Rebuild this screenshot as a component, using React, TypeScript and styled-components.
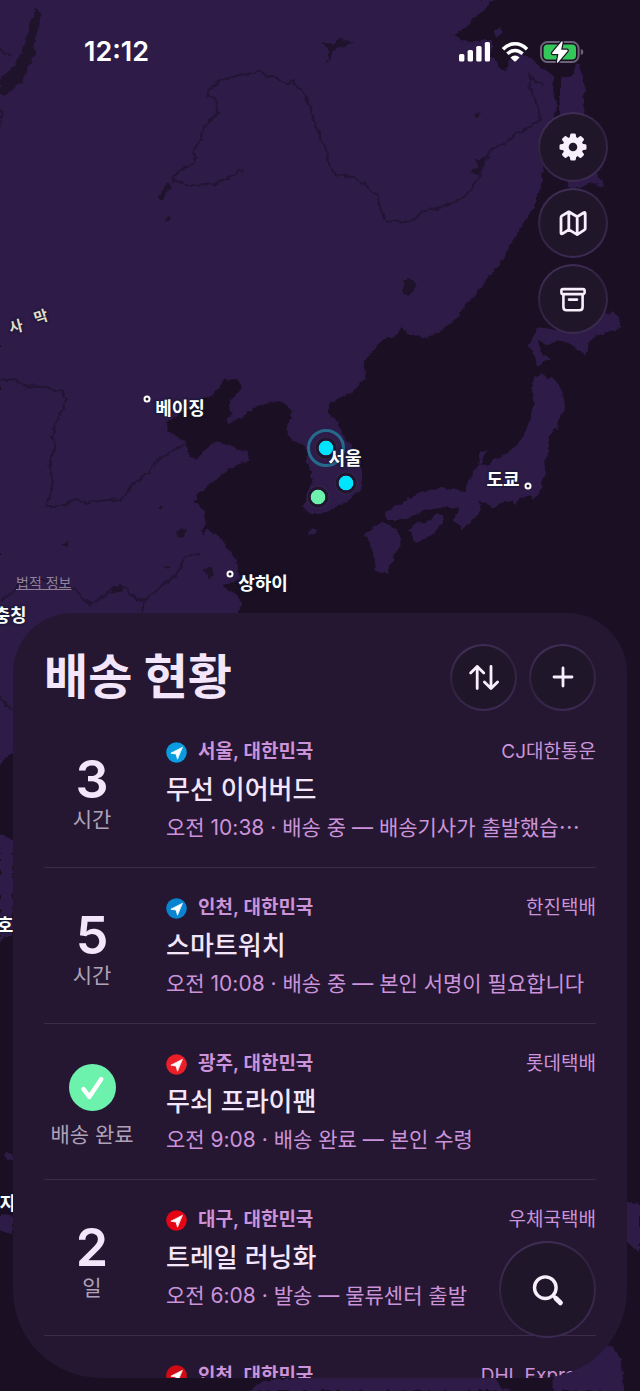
import type { ReactNode } from "react"
import styled, { createGlobalStyle } from "styled-components"

const GlobalStyle=createGlobalStyle`
*{
    box-sizing:border-box;
}
body{
    margin:0;
    background:#1b0f24;
    font-family:Inter,"Noto Sans CJK KR",sans-serif;
    color:#f3e6fa;
}
`
const Screen=styled.main`
    position:relative;
    display:flex;
    flex-direction:column;
    height:100vh;
    overflow:hidden;
`

/* map */

const MapLayer=styled.div`
    position:absolute;
    top:0;
    left:0;
    width:100%;
    aspect-ratio:640 / 1391;
`
const MapSvg=styled.svg`
    display:block;
    width:100%;
    height:100%;
`
const Place=styled.span<{$x:number,$y:number,$turn?:number,$muted?:boolean}>`
    position:absolute;
    left:${p=>p.$x/6.4}%;
    top:${p=>p.$y/13.91}%;
    transform:translate(-50%,-50%) rotate(${p=>p.$turn||0}deg);
    font-size:${p=>p.$muted?15:18}px;
    line-height:24px;
    font-weight:${p=>p.$muted?600:700};
    color:${p=>p.$muted?"#e6dcc8":"#ffffff"};
    white-space:nowrap;
    text-shadow:0 0 3px #0d1a2c,0 0 2px #0d1a2c;
`
const Town=styled.i<{$x:number,$y:number}>`
    position:absolute;
    left:${p=>p.$x/6.4}%;
    top:${p=>p.$y/13.91}%;
    width:7px;
    height:7px;
    transform:translate(-50%,-50%);
    border:2px solid #ffffff;
    border-radius:50%;
    background:#1b0f24;
`
const Pin=styled.i<{$x:number,$y:number,$color:string}>`
    position:absolute;
    left:${p=>p.$x/6.4}%;
    top:${p=>p.$y/13.91}%;
    width:21px;
    height:21px;
    transform:translate(-50%,-50%);
    border:3px solid #21152f;
    border-radius:50%;
    background:${p=>p.$color};
    background-clip:padding-box;
    box-shadow:0 0 0 1px #34264a;
`
const Halo=styled.i<{$x:number,$y:number}>`
    position:absolute;
    left:${p=>p.$x/6.4}%;
    top:${p=>p.$y/13.91}%;
    width:38px;
    height:38px;
    transform:translate(-50%,-50%);
    border:3px solid #246b8e;
    border-radius:50%;
`

/* top part */

const Top=styled.div`
    position:relative;
    display:flex;
    flex-direction:column;
    flex:1;
    min-height:0;
`
const StatusBar=styled.header`
    display:flex;
    justify-content:space-between;
    align-items:center;
    height:104px;
    padding:0 56px 0 84px;
`
const Clock=styled.time`
    font-size:27px;
    line-height:32px;
    font-weight:600;
    color:#ffffff;
`
const StatusIcons=styled.div`
    display:flex;
    align-items:center;
    gap:11px;
`
const Actions=styled.nav`
    display:flex;
    flex-direction:column;
    align-items:flex-end;
    gap:6px;
    padding:8px 32px 0;
`
const RoundButton=styled.button<{$size:number}>`
    display:flex;
    align-items:center;
    justify-content:center;
    width:${p=>p.$size}px;
    height:${p=>p.$size}px;
    padding:0;
    border:2px solid transparent;
    border-radius:50%;
    background:
        linear-gradient(#201629,#201629) padding-box,
        linear-gradient(160deg,#45325f,#30213f 45%,#3f2c58) border-box;
    color:#f7effc;
    cursor:pointer;
`
const Legal=styled.a`
    align-self:flex-start;
    margin:auto 16px 20px;
    font-size:14px;
    line-height:20px;
    color:#8f8299;
`

/* sheet */

const Sheet=styled.section`
    position:relative;
    flex:0 0 55vh;
    margin:0 13px 13px;
    padding:31px 31px 0;
    border-radius:60px 60px 88px 88px;
    background:#251731;
    overflow:hidden;
`
const SheetHeader=styled.div`
    display:flex;
    align-items:center;
    gap:12px;
    margin-bottom:1px;
`
const Heading=styled.h1`
    flex:1;
    margin:0;
    font-size:48px;
    line-height:66px;
    font-weight:700;
`
const List=styled.ul`
    margin:0;
    padding:0;
    list-style:none;
`
const Row=styled.li`
    display:flex;
    align-items:center;
    gap:26px;
    height:156px;
    border-bottom:1px solid #3a2b46;
`
const Eta=styled.div`
    display:flex;
    flex-direction:column;
    align-items:center;
    flex:0 0 96px;
    padding-top:10px;
`
const Count=styled.strong`
    font-size:52px;
    line-height:52px;
    font-weight:600;
`
const Unit=styled.span<{$done?:boolean}>`
    margin-top:${p=>p.$done?10:0}px;
    font-size:21px;
    line-height:28px;
    color:#afa2b8;
`
const Info=styled.div`
    display:flex;
    flex-direction:column;
    gap:6px;
    flex:1;
    min-width:0;
    padding-top:2px;
`
const InfoTop=styled.div`
    display:flex;
    align-items:center;
    gap:11px;
    font-size:19px;
    line-height:28px;
    color:#cb93da;
`
const Location=styled.span`
    flex:1;
    font-weight:600;
    white-space:nowrap;
`
const Carrier=styled.span`
    white-space:nowrap;
`
const Name=styled.h2`
    margin:0;
    font-size:26px;
    line-height:36px;
    font-weight:500;
`
const Detail=styled.p`
    margin:0;
    font-size:21px;
    line-height:28px;
    color:#cb93da;
    white-space:nowrap;
    overflow:hidden;
`
const SearchSlot=styled.div`
    position:absolute;
    right:31px;
    bottom:40px;
`

type Parcel={
    count?:string
    unit:string
    place:string
    carrier:string
    name:string
    detail:string
    color:string
}

const parcels:Parcel[]=[
    {count:"3",unit:"시간",place:"서울, 대한민국",carrier:"CJ대한통운",name:"무선 이어버드",detail:"오전 10:38 · 배송 중 — 배송기사가 출발했습⋯",color:"#0a9ce0"},
    {count:"5",unit:"시간",place:"인천, 대한민국",carrier:"한진택배",name:"스마트워치",detail:"오전 10:08 · 배송 중 — 본인 서명이 필요합니다",color:"#0a84d0"},
    {unit:"배송 완료",place:"광주, 대한민국",carrier:"롯데택배",name:"무쇠 프라이팬",detail:"오전 9:08 · 배송 완료 — 본인 수령",color:"#ec1f29"},
    {count:"2",unit:"일",place:"대구, 대한민국",carrier:"우체국택배",name:"트레일 러닝화",detail:"오전 6:08 · 발송 — 물류센터 출발",color:"#e60514"},
]

function Icon({size,children}:{size:number,children:ReactNode}){
    return(
        <svg width={size} height={size} viewBox={`${-size/2} ${-size/2} ${size} ${size}`} fill="none" stroke="currentColor" strokeLinecap="round" strokeLinejoin="round" aria-hidden="true">
            {children}
        </svg>
    )
}

function GearIcon(){
    return(
        <Icon size={30}>
            <circle r="7.3" strokeWidth="6"/>
            {[0,45,90,135,180,225,270,315].map(a=>
                <path key={a} d="M-2 -9 L-1.5 -12.2 H1.5 L2 -9 Z" fill="currentColor" strokeWidth="2.6" transform={`rotate(${a})`}/>
            )}
        </Icon>
    )
}

function MapIcon(){
    return(
        <Icon size={30}>
            <path strokeWidth="2.8" d="M-12 -5.6 Q-12 -6.6 -11.2 -7.1 L-4.2 -11.2 L4.2 -6.2 L10.6 -10.3 Q12.2 -11 12.2 -9.4 V5.4 Q12.2 6.4 11.4 6.9 L4.2 11.6 L-4.2 6.6 L-10.4 10.6 Q-12 11.5 -12 9.8 Z M-4.2 -11 V6.6 M4.2 -6.2 V11.4"/>
        </Icon>
    )
}

function ArchiveIcon(){
    return(
        <Icon size={30}>
            <rect x="-11.6" y="-9.9" width="23.2" height="5" rx="1.6" strokeWidth="2.6"/>
            <path strokeWidth="2.6" d="M-9.6 -4.8 V8 Q-9.6 11.2 -6.4 11.2 H6.4 Q9.6 11.2 9.6 8 V-4.8 M-4 0.6 H4"/>
        </Icon>
    )
}

function SortIcon(){
    return(
        <Icon size={34}>
            <path strokeWidth="2.8" d="M-6.8 11.6 V-10.6 M-13.4 -4 L-6.8 -10.6 L-0.2 -4 M7 -10.6 V11.6 M0.4 5 L7 11.6 L13.6 5"/>
        </Icon>
    )
}

function PlusIcon(){
    return(
        <Icon size={26}>
            <path strokeWidth="2.8" d="M-9 0 H9 M0 -9 V9"/>
        </Icon>
    )
}

function SearchIcon(){
    return(
        <Icon size={36}>
            <circle cx="-2.7" cy="-2.3" r="10.8" strokeWidth="3.4"/>
            <path strokeWidth="3.4" d="M5.4 5.8 L8 8.4"/>
            <path strokeWidth="5" d="M8 8.4 L12.4 12.8"/>
        </Icon>
    )
}

function CheckIcon(){
    return(
        <Icon size={47}>
            <circle r="23.5" fill="#6cf2ad" stroke="none"/>
            <path stroke="#ffffff" strokeWidth="4.4" d="M-9 1.6 L-3.2 9.4 L8.8 -8.4"/>
        </Icon>
    )
}

function PlaceIcon({color}:{color:string}){
    return(
        <Icon size={21}>
            <circle r="10.3" fill={color} stroke="none"/>
            <path fill="#ffffff" stroke="#ffffff" strokeWidth="0.8" d="M5.6 -5 L-5.6 0.7 L-0.4 1.5 L0.9 6.3 Z"/>
        </Icon>
    )
}

function Phone(){
    return(
        <StatusIcons>
            <svg width="31" height="22" viewBox="0 0 31 22" fill="#ffffff" aria-hidden="true">
                <rect x="0" y="13" width="5.4" height="7.6" rx="1.6"/>
                <rect x="8.6" y="9" width="5.4" height="11.6" rx="1.6"/>
                <rect x="17.2" y="5" width="5.4" height="15.6" rx="1.6"/>
                <rect x="25.8" y="1" width="5.2" height="19.6" rx="1.6"/>
            </svg>
            <svg width="28" height="22" viewBox="0 0 28 22" fill="none" stroke="#ffffff" aria-hidden="true">
                <path strokeWidth="3.6" d="M2 8.2 Q7.4 2.8 14 2.8 T26 8.2"/>
                <path strokeWidth="3.4" d="M6.4 12.8 Q9.8 9.5 14 9.5 T21.6 12.8"/>
                <path fill="#ffffff" stroke="none" d="M9.4 16.4 Q14 12.6 18.6 16.4 L14.8 20.2 Q14 20.9 13.2 20.2 Z"/>
            </svg>
            <svg width="44" height="24" viewBox="0 0 44 24" fill="none" aria-hidden="true">
                <rect x="1" y="2" width="37.6" height="20" rx="6.4" stroke="#6c6277" strokeWidth="2"/>
                <rect x="3.6" y="4.6" width="32.4" height="14.8" rx="4" fill="#34c759"/>
                <path fill="#6c6277" d="M40.8 9 Q43.4 9.6 43.4 12 T40.8 15 Z"/>
                <path fill="#ffffff" stroke="#1b0f24" strokeWidth="2.4" strokeLinejoin="round" paintOrder="stroke" d="M21.6 1.4 Q22.8 1 22.6 2.4 L21.2 9.8 H27 Q28.2 10 27.4 11.2 L18 22.4 Q16.8 23.4 17 21.6 L18.4 14 H12.8 Q11.4 13.8 12.4 12.4 Z"/>
            </svg>
        </StatusIcons>
    )
}

const mainland="M0 0 H493 L482 10 L470 21 L462 29 L453 35 L460 42 L475 43 L486 40 L492 44 L490 56 L498 68 L506 72 L511 60 L520 53 L530 59 L540 67 L553 78 L552 92 L556 108 L552 122 L548 140 L543 160 L541 180 L535 203 L520 227 L507 250 L497 267 L477 290 L463 307 L453 321 L433 334 L423 337 L407 332 L402 325 L395 335 L382 340 L372 350 L363 362 L364 378 L350 392 L330 402 L327 413 L337 423 L343 437 L355 450 L360 463 L360 487 L352 497 L333 507 L320 513 L310 513 L303 505 L310 497 L313 480 L308 463 L307 446 L293 440 L287 430 L293 410 L287 403 L277 400 L257 405 L240 417 L227 422 L233 415 L230 403 L243 387 L240 380 L233 378 L223 380 L213 393 L193 403 L177 415 L166 422 L167 432 L185 442 L187 457 L197 460 L207 450 L217 442 L230 448 L248 452 L247 460 L230 467 L213 480 L197 493 L193 502 L203 510 L205 520 L200 530 L202 538 L207 530 L218 537 L230 553 L235 562 L238 577 L220 587 L233 593 L240 603 L238 613 L200 720 L14 750 L8 754 L0 764 Z"

const islands=[
    "M560 77 L570 76 L577 63 L582 70 L585 90 L583 115 L590 150 L598 176 L603 187 L592 183 L580 187 L567 187 L563 150 L560 110 Z",
    "M493 30 L500 27 L502 33 L496 38 Z",
    "M532 337 L538 327 L555 330 L600 317 L613 310 L617 316 L622 327 L607 333 L595 336 L590 342 L586 355 L577 350 L568 342 L560 340 L547 345 L538 340 L539 349 L545 355 L550 358 L537 366 L535 357 L530 347 Z",
    "M533 377 L532 387 L533 403 L530 423 L520 440 L507 453 L487 465 L481 466 L483 458 L487 451 L480 452 L478 466 L470 480 L465 492 L443 487 L420 492 L403 502 L385 513 L387 520 L403 520 L427 510 L447 507 L460 508 L453 520 L462 529 L473 520 L483 510 L479 500 L486 503 L492 508 L500 505 L513 500 L516 506 L520 498 L529 494 L533 500 L539 493 L543 483 L545 467 L548 453 L548 437 L557 428 L558 420 L565 407 L563 393 L555 380 L547 377 L542 373 Z",
    "M380 522 L390 526 L397 530 L402 540 L393 557 L388 574 L375 572 L373 553 L368 537 L363 535 L372 528 Z",
    "M408 532 L417 523 L430 520 L433 514 L443 515 L443 523 L435 533 L417 543 Z",
    "M307 533 Q312 527 318 530 Q314 537 307 533 Z",
    "M0 834 L13 840 L13 933 L0 941 Z",
    "M4 1154 Q8 1150 13 1154 L13 1160 L6 1161 Z",
    "M0 1213 L13 1216 L13 1235 L0 1229 Z",
    "M620 1199 L640 1205 L640 1253 L620 1236 Z",
    "M612 1346 L620 1358 L622 1374 L624 1391 H553 L552 1377 H495 L500 1386 L514 1391 H248 L262 1381 L340 1374 Z",
]

const lakes=[
    "M35 9 L41 12 L38 26 L35 37 L35 55 L28 68 L25 78 L15 88 L5 96 L0 93 L0 80 L17 63 L23 47 L30 27 Z",
    "M168 183 L173 188 L165 196 L161 201 L157 196 Z",
    "M168 216 L171 217 L169 222 L165 222 Z",
    "M403 279 L412 279 L416 285 L408 297 L403 290 Z",
    "M322 42 L334 44 L340 39 L346 42 L356 41 L342 47 L334 50 L326 64 L330 52 Z",
    "M474 113 L480 114 L476 118 Z",
    "M470 172 L477 166 L475 160 L491 157 L484 163 L480 176 Z",
    "M528 72 L532 76 L530 80 Z",
    "M205 570 L211 568 L214 574 L209 580 Z",
    "M176 534 L183 527 L187 533 L180 538 Z",
    "M163 565 L170 566 L166 569 Z",
    "M114 587 L122 583 L121 591 L110 594 Z",
    "M158 507 L162 507 L161 510 Z",
    "M62 545 L69 541 L68 547 Z",
]

const rivers=[
    "M172 183 L176 174 L186 166 L194 164 L196 159 L193 153 L199 141 L206 125 L217 113 L218 103 L214 97 L207 97 L209 91 L219 81 L240 75 L260 72 L275 78 L286 83 L293 82 L302 91 L309 103 L315 125 L320 135 L326 150 L330 168 L336 175 L349 176 L362 182 L377 195 L381 209 L387 221 L410 222 L420 213 L450 204 L466 195 L479 178 L485 158 L493 148 L506 143 L514 135 L531 126 L540 120 L537 103 L529 88 L531 78 L543 85",
    "M172 177 L177 182 L181 181 L188 186 L205 184 L214 185 L228 178 L243 170",
    "M0 381 L14 379 L25 386 L46 387 L63 392 L67 400 L61 411 L51 436 L56 446 L50 460 L53 487 L47 506 L62 506 L75 499 L88 503 L108 500 L120 501 L133 485 L150 471 L158 459 L172 452 L185 443",
    "M0 600 L10 594 L20 585 L40 580 L60 583 L76 590 L84 600 L92 604 L102 597 L116 586 L126 589 L138 601 L148 598 L160 587 L176 575 L185 557 L200 553",
    "M144 601 L142 612 M0 48 L5 52 L12 55 M0 108 Q5 116 0 126 M0 695 L8 708 L13 709",
]

function AsiaMap(){
    return(
        <MapLayer>
            <MapSvg viewBox="0 0 640 1391" role="img" aria-label="지도">
                <defs>
                    <filter id="coast" x="0" y="0" width="100%" height="100%" colorInterpolationFilters="sRGB">
                        <feTurbulence type="fractalNoise" baseFrequency="0.14" numOctaves="3" seed="4" result="noise"/>
                        <feDisplacementMap in="SourceGraphic" in2="noise" scale="6" xChannelSelector="R" yChannelSelector="G"/>
                    </filter>
                </defs>
                <rect width="640" height="1391" fill="#1b0f24"/>
                <g filter="url(#coast)">
                    <path d={mainland} fill="#2e1b47" stroke="#2e1b47" strokeWidth="2"/>
                    {islands.map(d=><path key={d} d={d} fill="#2e1b47"/>)}
                    {lakes.map(d=><path key={d} d={d} fill="#1f122b"/>)}
                    {rivers.map(d=><path key={d} d={d} fill="none" stroke="#221433" strokeWidth="2"/>)}
                </g>
            </MapSvg>
            <Place $x={16} $y={327} $turn={-14} $muted>사</Place>
            <Place $x={41} $y={317} $turn={-18} $muted>막</Place>
            <Town $x={147} $y={399}/>
            <Place $x={180} $y={409}>베이징</Place>
            <Town $x={230} $y={574}/>
            <Place $x={263} $y={584}>상하이</Place>
            <Place $x={503} $y={480}>도쿄</Place>
            <Town $x={528} $y={486}/>
            <Place $x={10} $y={616}>충칭</Place>
            <Place $x={5} $y={926}>호</Place>
            <Place $x={8} $y={1204}>자</Place>
            <Halo $x={326} $y={448}/>
            <Pin $x={326} $y={448} $color="#00e5ff"/>
            <Place $x={345} $y={459}>서울</Place>
            <Pin $x={346} $y={483} $color="#00e5ff"/>
            <Pin $x={318} $y={497} $color="#6cf2ad"/>
        </MapLayer>
    )
}

function PlaceLine({color,place,carrier}:{color:string,place:string,carrier:string}){
    return(
        <InfoTop>
            <PlaceIcon color={color}/>
            <Location>{place}</Location>
            <Carrier>{carrier}</Carrier>
        </InfoTop>
    )
}

function ParcelRow({parcel}:{parcel:Parcel}){
    return(
        <Row>
            <Eta>
                {parcel.count?<Count>{parcel.count}</Count>:<CheckIcon/>}
                <Unit $done={!parcel.count}>{parcel.unit}</Unit>
            </Eta>
            <Info>
                <PlaceLine color={parcel.color} place={parcel.place} carrier={parcel.carrier}/>
                <Name>{parcel.name}</Name>
                <Detail>{parcel.detail}</Detail>
            </Info>
        </Row>
    )
}

const NextRow=styled.li`
    padding:26px 0 0 122px;
`

export default function App(){
    return(
        <>
        <GlobalStyle/>
        <Screen lang="ko">
            <AsiaMap/>
            <Top>
                <StatusBar>
                    <Clock>12:12</Clock>
                    <Phone/>
                </StatusBar>
                <Actions>
                    <RoundButton $size={70} aria-label="설정"><GearIcon/></RoundButton>
                    <RoundButton $size={70} aria-label="지도"><MapIcon/></RoundButton>
                    <RoundButton $size={70} aria-label="보관함"><ArchiveIcon/></RoundButton>
                </Actions>
                <Legal href="#legal">법적 정보</Legal>
            </Top>
            <Sheet>
                <SheetHeader>
                    <Heading>배송 현황</Heading>
                    <RoundButton $size={67} aria-label="정렬"><SortIcon/></RoundButton>
                    <RoundButton $size={67} aria-label="추가"><PlusIcon/></RoundButton>
                </SheetHeader>
                <List>
                    {parcels.map(parcel=><ParcelRow key={parcel.name} parcel={parcel}/>)}
                    <NextRow>
                        <PlaceLine color="#d20a14" place="인천, 대한민국" carrier="DHL Express"/>
                    </NextRow>
                </List>
                <SearchSlot>
                    <RoundButton $size={97} aria-label="검색"><SearchIcon/></RoundButton>
                </SearchSlot>
            </Sheet>
        </Screen>
        </>
    )
}
